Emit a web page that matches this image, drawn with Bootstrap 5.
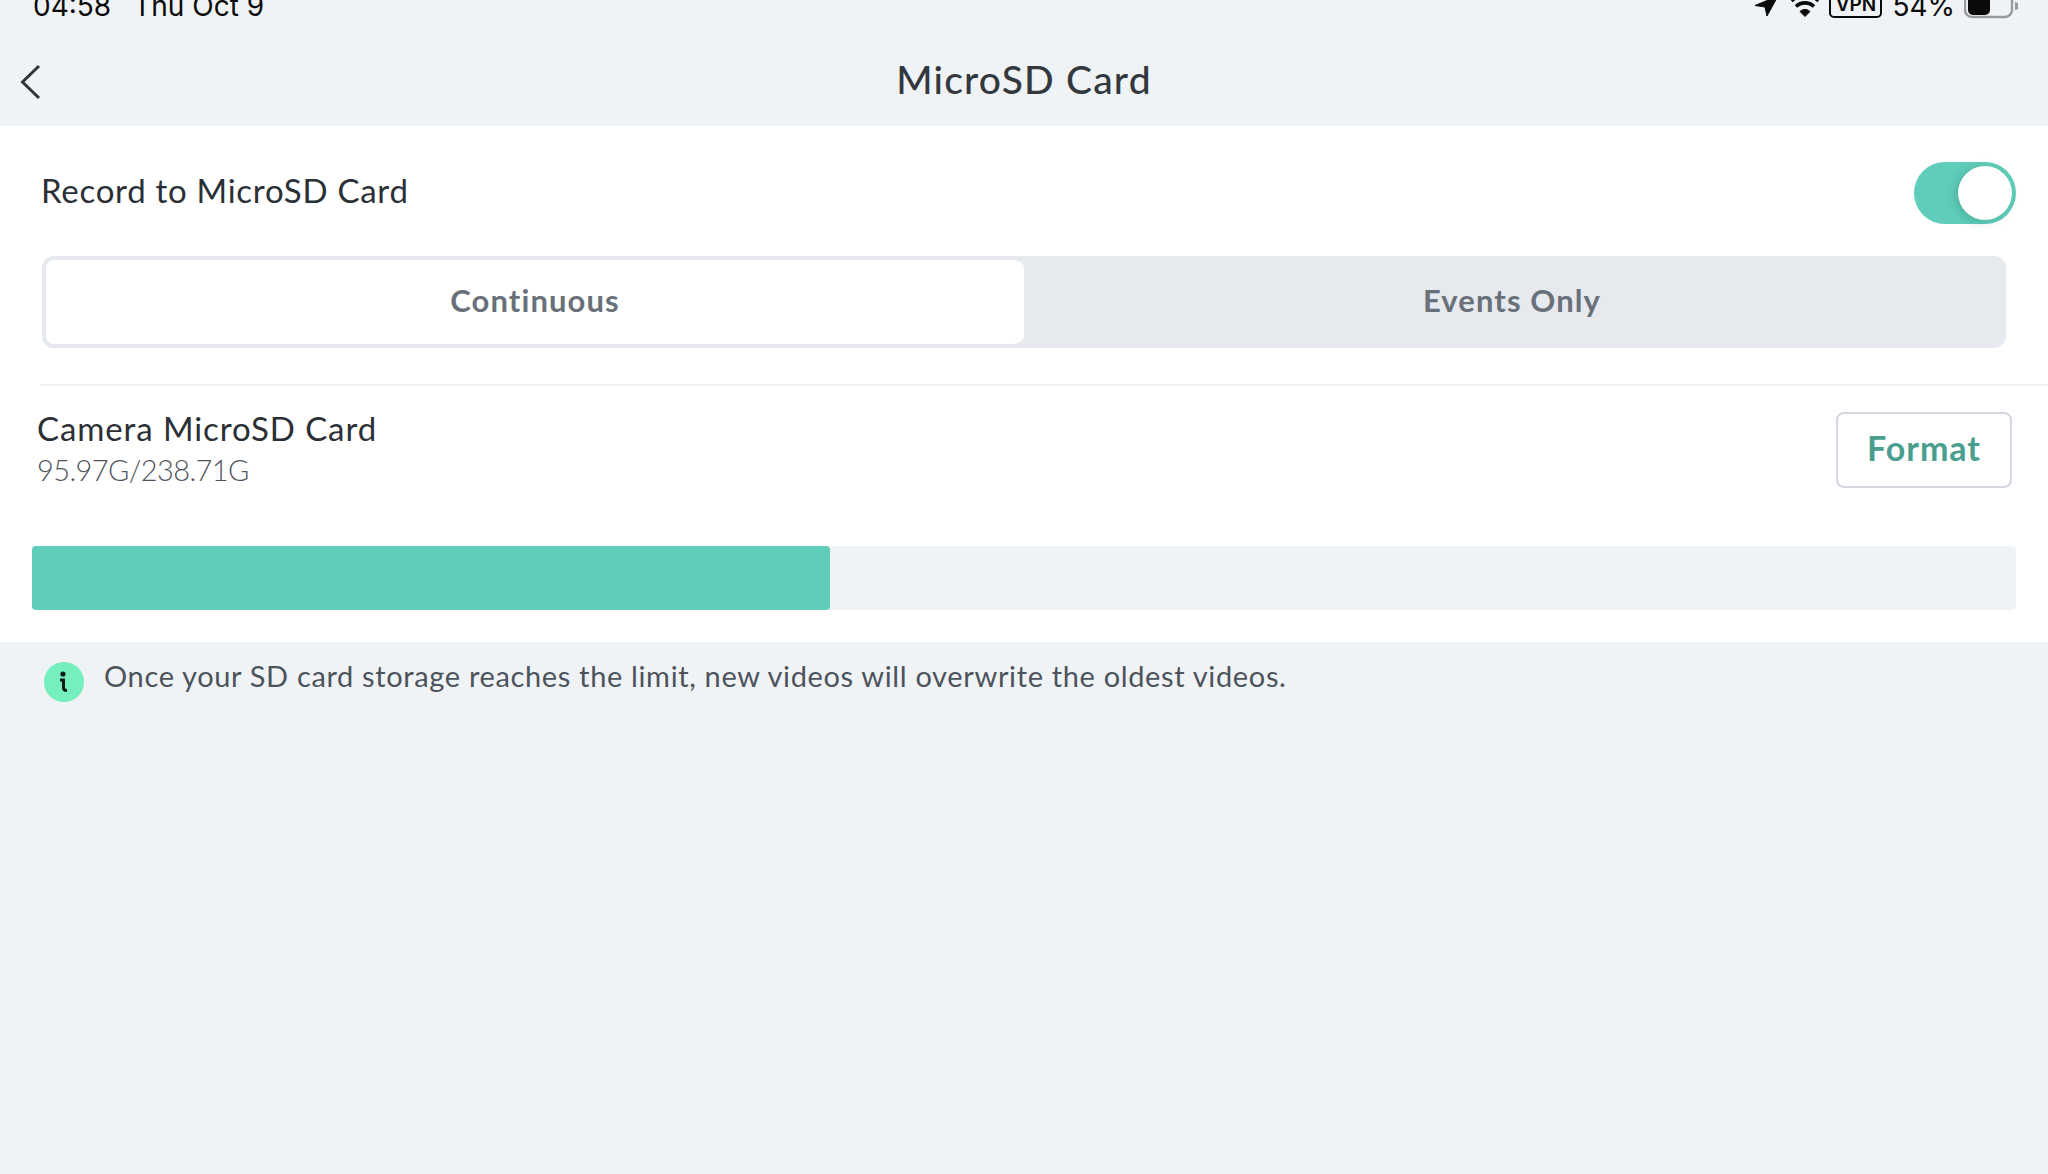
<!DOCTYPE html>
<html lang="en">
<head>
  <meta charset="UTF-8" />
  <meta name="viewport" content="width=device-width, initial-scale=1.0"/>
  <title>MicroSD Card</title>
  <link href="https://cdn.jsdelivr.net/npm/bootstrap@5.3.3/dist/css/bootstrap.min.css" rel="stylesheet"/>
  <style>
    html, body { height: 100%; }
    body { background: #f0f3f6; font-family: Lato, "Noto Sans", sans-serif; color: #2b3036; overflow: hidden; }

    /* status bar, the screenshot cuts its top off */
    .status-bar { height: 22px; overflow: hidden; padding: 0 30px 0 33px; font-family: Inter, "Liberation Sans", sans-serif; font-size: 28px; line-height: 30px; color: #0a0a0a; }
    .status-inner { margin-top: -9px; height: 31px; }
    .status-time { margin-right: 22px; }
    .status-icons svg { display: block; flex: none; }
    .status-wifi { margin: 0 10px 0 14px; }
    .status-pct { margin-left: 10px; }
    .status-batt { margin-left: 9px; }
    .vpn-box { border: 2px solid #0a0a0a; border-radius: 5px; height: 27px; width: 53px; font-size: 19px; font-weight: 600; line-height: 24px; text-align: center; flex: none; }

    .top-nav { height: 104px; padding-top: 10px; }
    .back-link { left: 20px; top: 42px; }
    .page-title { font-size: 39px; font-weight: 500; letter-spacing: 1.2px; color: #33383e; margin: 0; }

    .panel-white { background: #fff; height: 516px; }
    .record-row { height: 130px; padding: 0 32px 0 41px; }
    .record-label { font-size: 33px; letter-spacing: .72px; }
    .sw-track { width: 102px; height: 62px; border-radius: 31px; background: #5fcdb9; padding: 4px; margin-top: 3px; }
    .sw-thumb { width: 54px; height: 54px; border-radius: 50%; background: #fff; box-shadow: -3px 2px 8px rgba(40,120,105,.3); }

    .seg-wrap { margin: 0 42px; height: 92px; background: #e6e9ee; border-radius: 12px; }
    .seg-item { flex: 1 1 50%; font-size: 31px; font-weight: 700; letter-spacing: 1.1px; color: #6a7079; padding: 0 6px 3px 0; }
    .seg-on { background: #fff; border: 4px solid #e6e9ee; border-right: 0; border-radius: 12px; flex-basis: 982px; flex-grow: 0; padding: 0 0 3px; }

    .divider-line { height: 2px; background: #f0f1f3; margin: 36px 0 0 40px; }
    .card-row { padding: 26px 36px 0 37px; height: 160px; }
    .card-name { font-size: 33px; line-height: 42px; letter-spacing: .9px; color: #2b3036; margin-top: -5px; }
    .card-size { font-size: 29px; line-height: 41px; font-weight: 300; letter-spacing: -.6px; color: #4f555d; }
    .format-btn { width: 176px; height: 76px; border: 2px solid #d3d7e0; border-radius: 8px; background: #fff; color: #4a9e8e; font-size: 34px; font-weight: 700; letter-spacing: 1px; padding: 0 0 5px; }
    .format-btn:hover { background: #fff; color: #4a9e8e; border-color: #d3d7e0; }

    .usage-track { margin: 0 32px; height: 64px; border-radius: 4px; background: #f0f3f6; }
    .usage-fill { background: #5fcdb9; border-radius: 4px; height: 100%; }

    .info-row { padding: 20px 40px 0 44px; }
    .info-dot { width: 40px; height: 40px; border-radius: 50%; background: #74efbd; flex: none; }
    .info-text { font-size: 29px; line-height: 34px; letter-spacing: .65px; color: #4d535c; margin: -3px 0 0 20px; }
  </style>
</head>
<body>
  <div class="status-bar">
    <div class="status-inner d-flex justify-content-between">
      <div><span class="status-time">04:58</span><span>Thu Oct 9</span></div>
      <div class="status-icons d-flex">
        <svg width="22" height="31" viewBox="0 -9 22 31"><path d="M23 -4 L0 5.5 L10 7 L12 16 Z" fill="#0a0a0a" stroke="#0a0a0a" stroke-linejoin="round"/></svg>
        <svg width="28" height="31" viewBox="0 -9 28 31" class="status-wifi"><path d="M14 16.5 L9 11.5 a7 7 0 0 1 10 0 Z" fill="#0a0a0a" stroke="#0a0a0a" stroke-linejoin="round"/><path d="M5 6.5 a13 13 0 0 1 18 0 M0.5 1 a19 19 0 0 1 27 0" fill="none" stroke="#0a0a0a" stroke-width="3.6"/></svg>
        <div class="vpn-box">VPN</div>
        <span class="status-pct">54%</span>
        <svg width="54" height="31" viewBox="0 -9 54 31" class="status-batt"><rect x="1" y="-12" width="47" height="29" rx="7" fill="none" stroke="#9a9a9a" stroke-width="2.4"/><rect x="4" y="-9" width="22" height="24" rx="5" fill="#0a0a0a"/><path d="M51 2 a3.5 4 0 0 1 0 8 Z" fill="#9a9a9a"/></svg>
      </div>
    </div>
  </div>

  <div class="top-nav position-relative d-flex align-items-center justify-content-center">
    <a href="#" class="back-link position-absolute" aria-label="Back">
      <svg width="22" height="36" viewBox="0 0 22 36" class="d-block"><path d="M19 2 L2.5 18 L19 34" fill="none" stroke="#2f343a" stroke-width="3"/></svg>
    </a>
    <h1 class="page-title">MicroSD Card</h1>
  </div>

  <div class="panel-white">
    <div class="record-row d-flex align-items-center justify-content-between">
      <span class="record-label">Record to MicroSD Card</span>
      <div class="sw-track d-flex justify-content-end"><div class="sw-thumb"></div></div>
    </div>

    <div class="seg-wrap d-flex">
      <div class="seg-item seg-on d-flex align-items-center justify-content-center">Continuous</div>
      <div class="seg-item d-flex align-items-center justify-content-center">Events Only</div>
    </div>

    <div class="divider-line"></div>

    <div class="card-row d-flex justify-content-between align-items-start">
      <div>
        <div class="card-name">Camera MicroSD Card</div>
        <div class="card-size">95.97G/238.71G</div>
      </div>
      <button type="button" class="btn format-btn">Format</button>
    </div>

    <div class="usage-track">
      <div class="usage-fill" style="width: 40.2%"></div>
    </div>
  </div>

  <div class="info-row d-flex align-items-start">
    <div class="info-dot d-flex align-items-center justify-content-center">
      <svg width="14" height="24" viewBox="0 0 14 24"><circle cx="6" cy="4" r="2.6" fill="#0a1a14"/><path d="M3 10 H6.5 V18 Q6.5 20.5 10 20.5" fill="none" stroke="#0a1a14" stroke-width="3"/></svg>
    </div>
    <div class="info-text">Once your SD card storage reaches the limit, new videos will overwrite the oldest videos.</div>
  </div>
</body>
</html>
